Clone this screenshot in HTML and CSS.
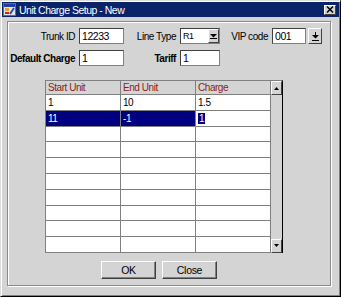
FILE: index.html
```html
<!DOCTYPE html>
<html>
    <head>
        <title>Unit Charge Setup - New</title>
        <link rel="stylesheet" href="styles.css">
    </head>

    <body>
        <div class="window">
            <div class="titleBar">
                <svg class="appIcon" width="13" height="13" viewBox="0 0 13 13">
                    <rect x="0.5" y="0.5" width="12" height="12" fill="#e4e4e4" stroke="#6b6b6b"/>
                    <rect x="1" y="1" width="11" height="3" fill="#1c3fa8"/>
                    <rect x="2" y="5" width="4" height="3" fill="#f0a020"/>
                    <rect x="2" y="9" width="4" height="2" fill="#d02020"/>
                    <path d="M7 11 L11 5" stroke="#2050c0" stroke-width="2"/>
                </svg>
                <span class="titleText">Unit Charge Setup - New</span>
                <span class="closeBtn">
                    <svg width="8" height="7" viewBox="0 0 8 7"><path d="M1 0.5 L7 6.5 M7 0.5 L1 6.5" stroke="#000" stroke-width="1.5"/></svg>
                </span>
            </div>

            <div class="panel">
                <!-- top fields -->
                <div class="formRow">
                    <span class="lbl lblA">Trunk ID</span>
                    <div class="field wA">12233</div>
                    <span class="lbl lblB">Line Type</span>
                    <div class="combo">
                        <span class="comboText">R1</span>
                        <span class="smallBtn comboBtn">
                            <svg width="7" height="6" viewBox="0 0 7 6"><path d="M0 1h7L3.5 4.5z" fill="#000"/><path d="M0 5.5h7" stroke="#000"/></svg>
                        </span>
                    </div>
                    <span class="lbl lblC">VIP code</span>
                    <div class="field wC">001</div>
                    <span class="smallBtn lovBtn">
                        <svg width="7" height="9" viewBox="0 0 7 9"><path d="M3 0h1v3h3L3.5 6.5 0 3h3z" fill="#000"/><path d="M0 8.5h7" stroke="#000"/></svg>
                    </span>
                </div>
                <div class="formRow">
                    <span class="lbl lblA bold">Default Charge</span>
                    <div class="field wA">1</div>
                    <span class="lbl lblB bold">Tariff</span>
                    <div class="field wB">1</div>
                </div>

                <!-- charge table -->
                <div class="gridBox">
                    <div class="grid">
                        <div class="cell hdr">Start Unit</div>
                        <div class="cell hdr">End Unit</div>
                        <div class="cell hdr">Charge</div>

                        <div class="cell">1</div>
                        <div class="cell">10</div>
                        <div class="cell">1.5</div>

                        <div class="cell sel">11</div>
                        <div class="cell sel">-1</div>
                        <div class="cell"><span class="selText">1</span></div>

                        <div class="cell"></div><div class="cell"></div><div class="cell"></div>
                        <div class="cell"></div><div class="cell"></div><div class="cell"></div>
                        <div class="cell"></div><div class="cell"></div><div class="cell"></div>
                        <div class="cell"></div><div class="cell"></div><div class="cell"></div>
                        <div class="cell"></div><div class="cell"></div><div class="cell"></div>
                        <div class="cell"></div><div class="cell"></div><div class="cell"></div>
                        <div class="cell"></div><div class="cell"></div><div class="cell"></div>
                        <div class="cell"></div><div class="cell"></div><div class="cell"></div>
                    </div>
                    <div class="scrollBar">
                        <span class="scrollBtn">
                            <svg width="5" height="3" viewBox="0 0 5 3"><path d="M2.5 0L5 3H0z" fill="#000"/></svg>
                        </span>
                        <span class="scrollTrack"></span>
                        <span class="scrollBtn">
                            <svg width="5" height="3" viewBox="0 0 5 3"><path d="M0 0h5L2.5 3z" fill="#000"/></svg>
                        </span>
                    </div>
                </div>

                <div class="buttonRow">
                    <button class="btn">OK</button>
                    <button class="btn">Close</button>
                </div>
            </div>
        </div>
    </body>
</html>
```

FILE: styles.css
```css
body {
    margin: 0;
    background: #000;
    font-family: "Liberation Sans", Arial, sans-serif;
    font-size: 10px;
    letter-spacing: -0.45px;
    color: #000;
}

.window {
    width: 341px;
    height: 297px;
    box-sizing: border-box;
    padding: 1px;
    background: #d4d4d4;
    border: 1px solid;
    border-color: #dcdcdc #000 #000 #dcdcdc;
    box-shadow: inset 1px 1px 0 #fff, inset -1px -1px 0 #808080;
}

/* Title bar */
.titleBar {
    height: 15px;
    background: #0a246a;
    display: flex;
    align-items: center;
}

.appIcon {
    margin-left: 1px;
    flex: none;
}

.titleText {
    color: #fff;
    margin-left: 3px;
    font-size: 10.5px;
    letter-spacing: -0.5px;
    flex: 1;
}

.closeBtn {
    width: 12px;
    height: 10px;
    margin-right: 3px;
    box-sizing: border-box;
    background: #d4d4d4;
    border: 1px solid;
    border-color: #fff #404040 #404040 #fff;
    display: flex;
    align-items: center;
    justify-content: center;
}

/* Main panel with etched border */
.panel {
    margin: 4px 0 0 5px;
    width: 324px;
    height: 265px;
    box-sizing: border-box;
    border: 1px solid #8a8a8a;
    box-shadow: inset 1px 1px 0 #fff, 1px 1px 0 #fff;
}

.formRow {
    display: flex;
    align-items: center;
    height: 16px;
    margin-top: 6px;
}

.lbl {
    box-sizing: border-box;
    text-align: right;
    padding-right: 4px;
    white-space: nowrap;
}

.bold {
    font-weight: bold;
}

.lblA { width: 71px; }
.lblB { width: 56px; }
.lblC { width: 52px; }

.field {
    height: 16px;
    box-sizing: border-box;
    background: #fff;
    border: 1px solid;
    border-color: #404040 #808080 #808080 #404040;
    padding-left: 2px;
    line-height: 14px;
    font-size: 10.5px;
}

.wA { width: 45px; }
.wB { width: 40px; }
.wC { width: 34px; }

.combo {
    width: 40px;
    height: 16px;
    box-sizing: border-box;
    background: #fff;
    border: 1px solid;
    border-color: #404040 #808080 #808080 #404040;
    display: flex;
    align-items: center;
    justify-content: space-between;
}

.comboText {
    padding-left: 2px;
    font-size: 9px;
}

.smallBtn {
    box-sizing: border-box;
    background: #d4d4d4;
    border: 1px solid;
    border-color: #fff #404040 #404040 #fff;
    display: flex;
    align-items: center;
    justify-content: center;
}

.comboBtn {
    width: 11px;
    height: 14px;
}

.lovBtn {
    width: 14px;
    height: 16px;
    margin-left: 2px;
}

/* Table */
.gridBox {
    display: flex;
    margin: 14px 0 0 37px;
    width: 238px;
}

.grid {
    display: grid;
    grid-template-columns: 75px 75px 75px;
    grid-template-rows: 14px repeat(10, 15.8px);
    background: #fff;
    border-left: 1px solid #808080;
    border-top: 1px solid #808080;
}

.cell {
    box-sizing: border-box;
    border-right: 1px solid #808080;
    border-bottom: 1px solid #808080;
    padding-left: 2px;
    display: flex;
    align-items: center;
    white-space: nowrap;
}

.hdr {
    background: #d4d4d4;
    color: #8b1c1c;
}

.sel {
    background: #000080;
    color: #fff;
}

.selText {
    background: #000080;
    color: #fff;
    padding: 0 1px;
}

.scrollBar {
    width: 12px;
    display: flex;
    flex-direction: column;
    background: #d4d4d4;
    border-right: 1px solid #000;
    border-top: 1px solid #808080;
}

.scrollBtn {
    height: 14px;
    box-sizing: border-box;
    border: 1px solid;
    border-color: #fff #404040 #404040 #fff;
    display: flex;
    align-items: center;
    justify-content: center;
}

.scrollTrack {
    flex: 1;
}

/* Bottom buttons */
.buttonRow {
    display: flex;
    gap: 6px;
    margin: 8px 0 0 93px;
}

.btn {
    width: 55px;
    height: 18px;
    margin: 0;
    padding: 0;
    background: #d4d4d4;
    font-family: inherit;
    font-size: 10.5px;
    letter-spacing: -0.3px;
    color: #000;
    border: 1px solid;
    border-color: #fff #404040 #404040 #fff;
    box-shadow: inset -1px -1px 0 #808080;
}
```
